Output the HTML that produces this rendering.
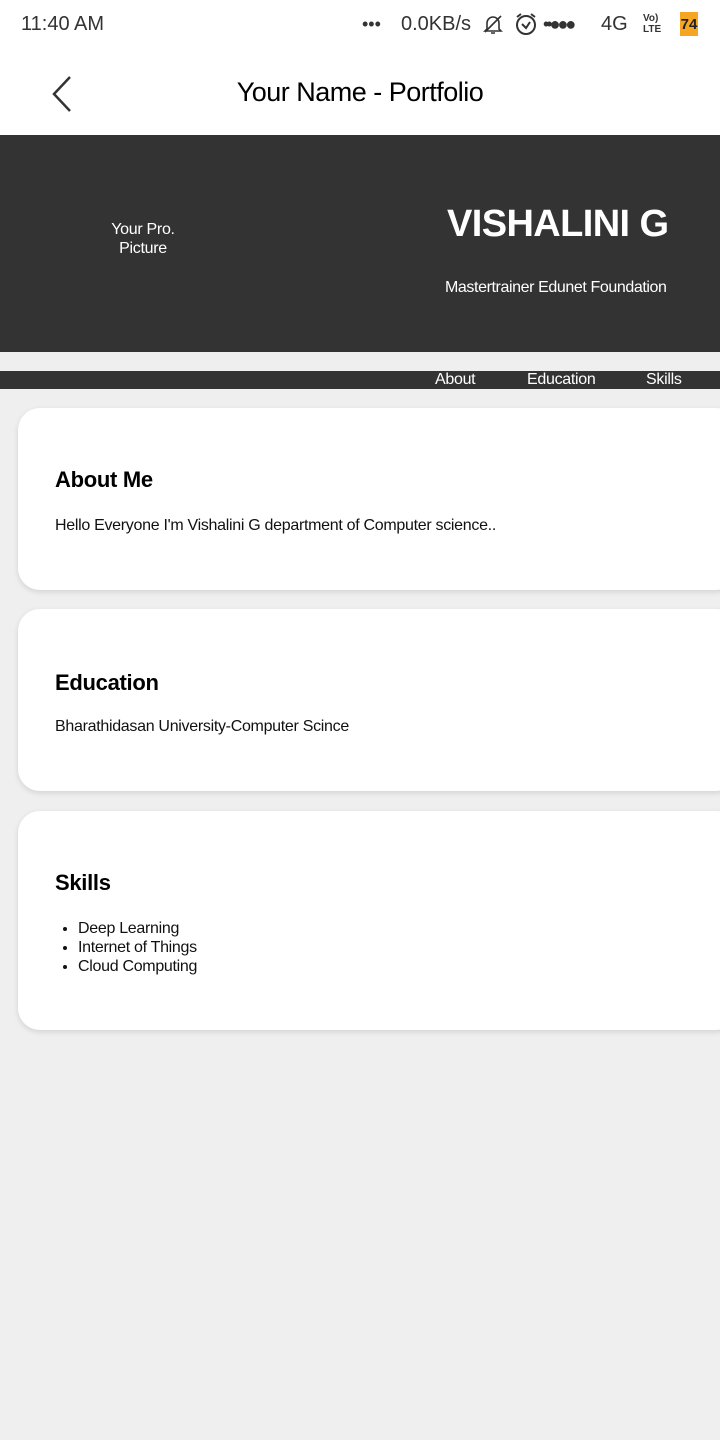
<!DOCTYPE html>
<html><head><meta charset="utf-8"><style>
*{margin:0;padding:0;box-sizing:border-box}
body{width:720px;height:1440px;background:#efefef;font-family:"Liberation Sans",sans-serif;position:relative;overflow:hidden}
.sb{position:absolute;top:0;left:0;width:720px;height:52px;background:#fff;font-size:20px;color:#333}
.ab{position:absolute;top:52px;left:0;width:720px;height:83px;background:#fff}
.hero{position:absolute;top:135px;left:0;width:720px;height:217px;background:#333;color:#fff}
.nav{position:absolute;top:371px;left:0;width:720px;height:18px;background:#333;color:#fff;font-size:16px;line-height:18px;letter-spacing:-0.3px}
.card{position:absolute;left:18px;width:720px;background:#fff;border-radius:22px;box-shadow:0 2px 6px rgba(0,0,0,.12)}
.card h2{position:absolute;left:37px;font-size:22px;font-weight:bold;color:#000;letter-spacing:-0.3px}
.card p,.card li{font-size:16px;color:#111;letter-spacing:-0.3px}
</style></head><body>
<div class="sb">
<span style="position:absolute;left:21px;top:13px">11:40 AM</span>
<span style="position:absolute;left:362px;top:14px;font-size:18px">•••</span>
<span style="position:absolute;left:401px;top:13px">0.0KB/s</span>
<svg style="position:absolute;left:481px;top:12px" width="24" height="24"><path d="M6 17V11a6 6 0 0 1 12 0v6l2 2H4zM10 21h4M4 20L20 4" stroke="#333" stroke-width="1.6" fill="none"/></svg>
<svg style="position:absolute;left:514px;top:12px" width="24" height="24"><circle cx="12" cy="13" r="9" fill="none" stroke="#333" stroke-width="2"/><path d="M8 12l4 4 4-6M3 5l4-3M21 5l-4-3" stroke="#333" stroke-width="2" fill="none"/></svg>
<span style="position:absolute;left:543px;top:14px;font-size:18px;letter-spacing:-3px">••●●●</span>
<span style="position:absolute;left:601px;top:13px">4G</span>
<span style="position:absolute;left:643px;top:13px;font-size:10px;font-weight:bold;line-height:11px">Vo)<br>LTE</span>
<div style="position:absolute;left:680px;top:12px;width:18px;height:24px;background:#f5a623;font-size:15px;font-weight:bold;color:#222;text-align:center;line-height:26px">74</div>
</div>
<div class="ab">
<svg style="position:absolute;left:50px;top:22px" width="24" height="40"><path d="M20 3L4 20l16 17" stroke="#333" stroke-width="2.5" fill="none"/></svg>
<div style="position:absolute;left:0;width:720px;top:25px;text-align:center;font-size:27px;color:#000;letter-spacing:-0.5px">Your Name - Portfolio</div>
</div>
<div class="hero">
<div style="position:absolute;left:100px;top:85px;width:86px;text-align:center;font-size:16px;line-height:19px;letter-spacing:-0.3px">Your Pro.<br>Picture</div>
<div style="position:absolute;left:447px;top:68px;font-size:38px;font-weight:bold;letter-spacing:-0.6px">VISHALINI G</div>
<div style="position:absolute;left:445px;top:144px;font-size:16px;letter-spacing:-0.4px">Mastertrainer Edunet Foundation</div>
</div>
<div class="nav"><span style="position:absolute;left:435px">About</span><span style="position:absolute;left:527px">Education</span><span style="position:absolute;left:646px">Skills</span></div>
<div class="card" style="top:408px;height:182px"><h2 style="top:59px">About Me</h2><p style="position:absolute;left:37px;top:109px">Hello Everyone I'm Vishalini G department of Computer science..</p></div>
<div class="card" style="top:609px;height:182px"><h2 style="top:61px">Education</h2><p style="position:absolute;left:37px;top:109px">Bharathidasan University-Computer Scince</p></div>
<div class="card" style="top:811px;height:219px"><h2 style="top:59px">Skills</h2><ul style="position:absolute;left:60px;top:108px;line-height:19px"><li>Deep Learning</li><li>Internet of Things</li><li>Cloud Computing</li></ul></div>
</body></html>
